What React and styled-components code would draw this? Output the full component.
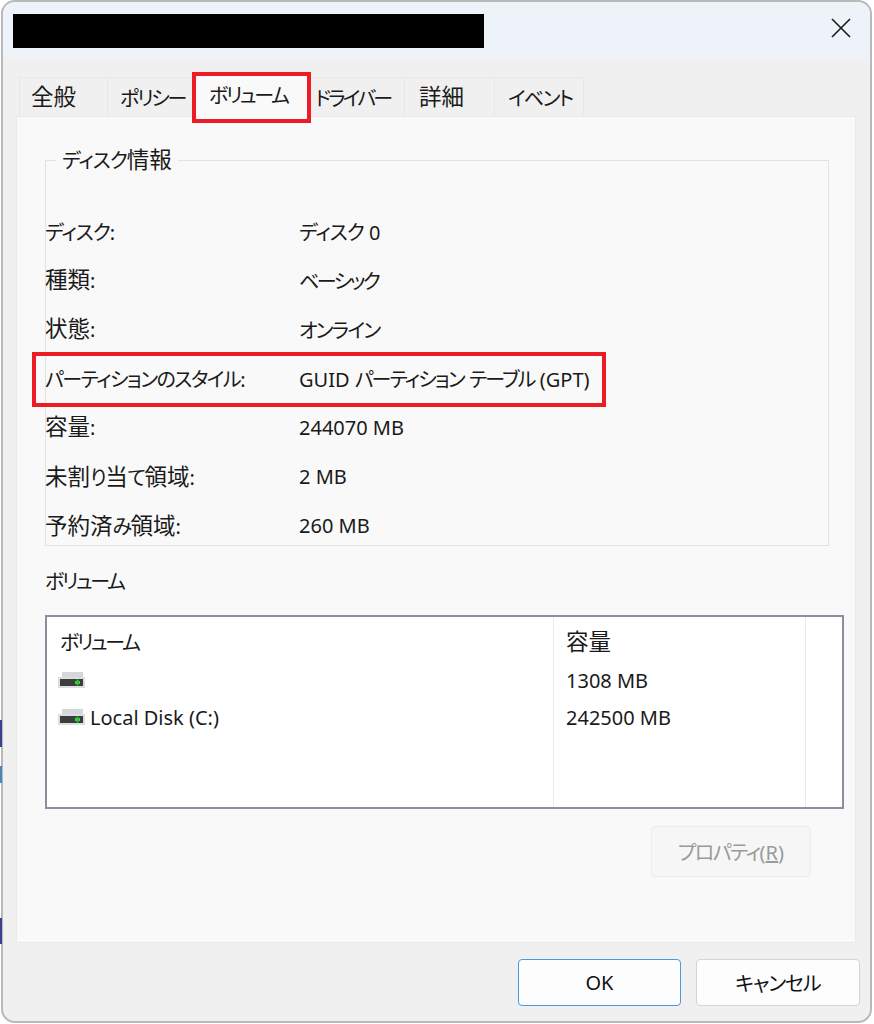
import styled, { createGlobalStyle } from "styled-components";

const GlobalStyle = createGlobalStyle`
  html, body {
    margin: 0;
    padding: 0;
    background: #fff;
  }
  * {
    box-sizing: border-box;
  }
`;

// bits of the window behind the dialog, showing along the left edge
const BehindEdge = styled.div`
  position: fixed;
  left: 0;
  top: 0;
  width: 2px;
  height: 100%;
  z-index: 3;
  background: linear-gradient(
    to bottom,
    transparent 720px,
    #3a3f8f 720px,
    #3a3f8f 747px,
    transparent 747px,
    transparent 766px,
    #4a86b8 766px,
    #4a86b8 783px,
    transparent 783px,
    transparent 918px,
    #3a3f8f 918px,
    #3a3f8f 944px,
    transparent 944px
  );
`;

const Dialog = styled.div`
  width: 871px;
  height: 1023px;
  margin-left: 1px;
  display: flex;
  flex-direction: column;
  background: #f0f0f0;
  border: 2px solid #b9b9b9;
  border-radius: 14px;
  overflow: hidden;
  color: #1a1a1a;
  font-family: "Noto Sans", "Noto Sans CJK JP", sans-serif;
  font-size: 20px;
  font-feature-settings: "palt";
`;

const Kana = styled.span`
  letter-spacing: ${(p) => p.$track}px;
`;

const Han = styled.span`
  font-size: 22.5px;
  line-height: 1;
`;

const TitleBar = styled.div`
  height: 56px;
  flex: none;
  display: flex;
  align-items: flex-start;
  justify-content: space-between;
  padding: 12px 19px 0 10px;
  background: #eef3f9;
`;

const RedactedTitle = styled.div`
  width: 471px;
  height: 34px;
  background: #000;
`;

const CloseButton = styled.button`
  width: 20px;
  height: 20px;
  margin-top: 4px;
  padding: 0;
  border: 0;
  background: none;
  color: #1f1f1f;
  display: flex;
`;

const Body = styled.div`
  flex: 1;
  display: flex;
  flex-direction: column;
  padding: 19px 14px 0 13px;
`;

const TabRow = styled.div`
  display: flex;
  height: 39px;
  padding-left: 3px;
  flex: none;
`;

const Tab = styled.div`
  position: relative;
  width: ${(p) => p.$width}px;
  display: flex;
  align-items: center;
  white-space: nowrap;
  background: ${(p) => (p.$active ? "#f9f9f9" : "#f0f0f0")};
  border: 1px solid #e8e8e8;
  border-left-width: ${(p) => (p.$first ? 1 : 0)}px;
  border-bottom: 0;
  padding-left: ${(p) => p.$pad}px;
  z-index: ${(p) => (p.$active ? 1 : 0)};
  ${(p) => p.$active && "margin-top: -5px; height: 45px; align-self: flex-start; padding-bottom: 2px;"}
`;

const Callout = styled.span`
  position: absolute;
  border: 4.5px solid #ed1c24;
  pointer-events: none;
  z-index: 2;
`;

const TabCallout = styled(Callout)`
  left: -1px;
  right: -1px;
  top: -1px;
  height: 51px;
`;

const Panel = styled.div`
  height: 827px;
  flex: none;
  display: flex;
  flex-direction: column;
  background: #f9f9f9;
  border: 1px solid #e9e9e9;
  padding: 30px 26px 0 28px;
`;

const GroupBox = styled.fieldset`
  margin: 0;
  padding: 13px 0 0;
  min-width: 0;
  height: 399px;
  flex: none;
  border: 0;
  position: relative;
`;

const GroupFrame = styled.div`
  border: 1px solid #e2e2e2;
  height: 386px;
`;

const GroupTitle = styled.div`
  position: absolute;
  top: 1px;
  left: 11px;
  padding: 0 6px;
  line-height: 26px;
  background: #f9f9f9;
`;

const InfoRow = styled.div`
  position: relative;
  display: grid;
  grid-template-columns: 254px 1fr;
  height: 49px;
  align-items: center;
  margin-left: -1px;
`;

const FirstGap = styled.div`
  height: 46px;
`;

const RowCallout = styled(Callout)`
  left: -13px;
  top: -2px;
  width: 574px;
  height: 55px;
`;

const SectionLabel = styled.div`
  margin-top: 21px;
  line-height: 30px;
`;

const ListBox = styled.div`
  margin-top: 18px;
  width: 799px;
  height: 194px;
  flex: none;
  background: #fff;
  border: 2px solid #8b8e9c;
  display: grid;
  grid-template-columns: 507px 252px 1fr;
`;

const ListColumn = styled.div`
  border-right: 1px solid ${(p) => (p.$last ? "transparent" : "#e6ecf5")};
  padding: 10px 0 0 ${(p) => p.$pad}px;
  display: flex;
  flex-direction: column;
`;

const HeaderCell = styled.div`
  height: 32px;
  line-height: 32px;
  margin-bottom: 3px;
`;

const ListCell = styled.div`
  height: 37px;
  display: flex;
  align-items: center;
  gap: 5px;
`;

const DriveGlyph = styled.svg`
  margin-left: -2px;
  margin-top: -2px;
  flex: none;
`;

const PanelActions = styled.div`
  display: flex;
  justify-content: flex-end;
  margin-top: 17px;
  padding-right: 18px;
`;

const PropertyButton = styled.button`
  width: 160px;
  height: 51px;
  background: #f6f6f6;
  border: 1px solid #ececec;
  border-radius: 4px;
  color: #9a9a9a;
  font: inherit;
  font-feature-settings: inherit;
  padding: 0;
`;

const Mnemonic = styled.span`
  text-decoration: underline;
`;

const Footer = styled.div`
  display: flex;
  justify-content: flex-end;
  gap: 15px;
  padding-top: 16px;
  margin-right: -4px;
`;

const DialogButton = styled.button`
  width: ${(p) => p.$width}px;
  height: 47px;
  background: #fdfdfd;
  border: 1px solid ${(p) => (p.$primary ? "#4a9ae0" : "#d4d4d4")};
  border-radius: 4px;
  color: #111;
  font: inherit;
  font-feature-settings: inherit;
  padding: 0;
`;

function CloseIcon() {
  return (
    <svg width="20" height="20" viewBox="0 0 20 20" fill="none" stroke="currentColor" strokeWidth="1.7">
      <path d="M1 1 L19 19 M19 1 L1 19" />
    </svg>
  );
}

function DriveIcon() {
  return (
    <DriveGlyph width="27" height="16" viewBox="0 0 27 16">
      <path d="M4 0 H25 V6 H4 Z" fill="#d5d8da" />
      <rect x="0" y="5" width="27" height="11" fill="#dcdfe1" />
      <rect x="2" y="7" width="23" height="7" fill="#3b3d3f" />
      <rect x="17" y="9" width="5" height="3" fill="#2fe02f" />
      <rect x="18.5" y="7.5" width="2" height="6" fill="#35b83a" />
    </DriveGlyph>
  );
}

// the reference font sets kana narrow and kanji large, so each script run gets its own span
function Jp({ text, track = -1.5 }) {
  const runs = text.match(/[\u4e00-\u9fff]+|[\u3040-\u30ff]+|[^\u3040-\u30ff\u4e00-\u9fff]+/g);
  return runs.map((run, i) => {
    if (/[\u4e00-\u9fff]/.test(run)) return <Han key={i}>{run}</Han>;
    if (/[\u3040-\u30ff]/.test(run)) return <Kana key={i} $track={track}>{run}</Kana>;
    return run;
  });
}

const tabs = [
  { label: "全般", width: 89, pad: 11 },
  { label: "ポリシー", width: 85, pad: 12, track: -2.2 },
  { label: "ボリューム", width: 118, pad: 16, track: -2.4 },
  { label: "ドライバー", width: 94, pad: 4, track: -2.7 },
  { label: "詳細", width: 90, pad: 14 },
  { label: "イベント", width: 89, pad: 13, track: -1.7 },
];

const diskInfo = [
  { label: "ディスク:", value: "ディスク 0", labelTrack: -1, valueTrack: -1 },
  { label: "種類:", value: "ベーシック", valueTrack: -2.5 },
  { label: "状態:", value: "オンライン", valueTrack: -1.7 },
  { label: "パーティションのスタイル:", value: "GUID パーティション テーブル (GPT)", valueTrack: -1.85, marked: true },
  { label: "容量:", value: "244070 MB" },
  { label: "未割り当て領域:", value: "2 MB" },
  { label: "予約済み領域:", value: "260 MB" },
];

export default function App() {
  return (
    <>
      <GlobalStyle />
      <BehindEdge />
      <Dialog>
        <TitleBar>
          <RedactedTitle />
          <CloseButton>
            <CloseIcon />
          </CloseButton>
        </TitleBar>
        <Body>
          <TabRow>
            {tabs.map((tab, i) => (
              <Tab key={tab.label} $width={tab.width} $pad={tab.pad} $active={i === 2} $first={i === 0}>
                <span><Jp text={tab.label} track={tab.track} /></span>
                {i === 2 && <TabCallout />}
              </Tab>
            ))}
          </TabRow>
          <Panel>
            <GroupBox>
              <GroupTitle><Jp text="ディスク情報" track={-1} /></GroupTitle>
              <GroupFrame>
                <FirstGap />
                {diskInfo.map((row) => (
                  <InfoRow key={row.label}>
                    <span><Jp text={row.label} track={row.labelTrack} /></span>
                    <span><Jp text={row.value} track={row.valueTrack} /></span>
                    {row.marked && <RowCallout />}
                  </InfoRow>
                ))}
              </GroupFrame>
            </GroupBox>
            <SectionLabel><Jp text="ボリューム" track={-2.4} /></SectionLabel>
            <ListBox>
              <ListColumn $pad={13}>
                <HeaderCell><Jp text="ボリューム" track={-2.4} /></HeaderCell>
                <ListCell>
                  <DriveIcon />
                </ListCell>
                <ListCell>
                  <DriveIcon />
                  Local Disk (C:)
                </ListCell>
              </ListColumn>
              <ListColumn $pad={12}>
                <HeaderCell><Jp text="容量" /></HeaderCell>
                <ListCell>1308 MB</ListCell>
                <ListCell>242500 MB</ListCell>
              </ListColumn>
              <ListColumn $last />
            </ListBox>
            <PanelActions>
              <PropertyButton><Jp text="プロパティ" />(<Mnemonic>R</Mnemonic>)</PropertyButton>
            </PanelActions>
          </Panel>
          <Footer>
            <DialogButton $width={163} $primary>OK</DialogButton>
            <DialogButton $width={164}><Jp text="キャンセル" track={-1} /></DialogButton>
          </Footer>
        </Body>
      </Dialog>
    </>
  );
}
